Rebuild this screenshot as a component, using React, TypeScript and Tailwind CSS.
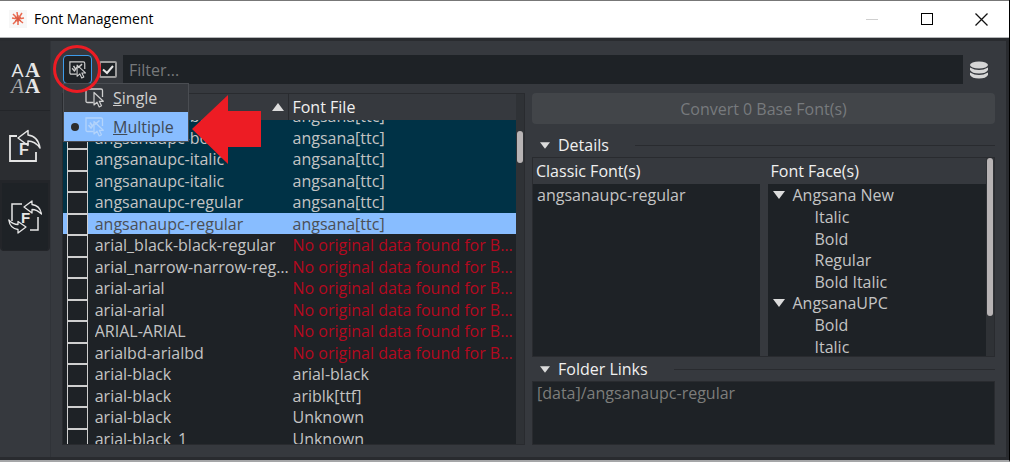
import { useLayoutEffect, useRef, useState } from "react";

type FontRow = { name: string; file: string; state?: "marked" | "current" | "missing" };

const MISSING = "No original data found for Base Font";

const FONTS: FontRow[] = [
  { name: "angsanaupc-bold", file: "angsana[ttc]", state: "marked" },
  { name: "angsanaupc-bold", file: "angsana[ttc]", state: "marked" },
  { name: "angsanaupc-italic", file: "angsana[ttc]", state: "marked" },
  { name: "angsanaupc-italic", file: "angsana[ttc]", state: "marked" },
  { name: "angsanaupc-regular", file: "angsana[ttc]", state: "marked" },
  { name: "angsanaupc-regular", file: "angsana[ttc]", state: "current" },
  { name: "arial_black-black-regular", file: MISSING, state: "missing" },
  { name: "arial_narrow-narrow-regular", file: MISSING, state: "missing" },
  { name: "arial-arial", file: MISSING, state: "missing" },
  { name: "arial-arial", file: MISSING, state: "missing" },
  { name: "ARIAL-ARIAL", file: MISSING, state: "missing" },
  { name: "arialbd-arialbd", file: MISSING, state: "missing" },
  { name: "arial-black", file: "arial-black" },
  { name: "arial-black", file: "ariblk[ttf]" },
  { name: "arial-black", file: "Unknown" },
  { name: "arial-black_1", file: "Unknown" },
];

const FACES = [
  { family: "Angsana New", styles: ["Italic", "Bold", "Regular", "Bold Italic"] },
  { family: "AngsanaUPC", styles: ["Bold", "Italic"] },
];

const ROW = {
  marked: "bg-[#003246] text-[#c4c4c4]",
  current: "bg-[#88bdff] text-[#4b4f55]",
  missing: "text-[#c4c4c4]",
};

const TAB = "flex h-[70px] w-full items-center justify-center border-b border-[#232529]";
const HEADING = "flex items-center gap-2 pl-2 text-[#f0f0f0]";

function Triangle({ up = false, className = "" }: { up?: boolean; className?: string }) {
  return (
    <svg viewBox="0 0 12 8" className={`shrink-0 fill-[#dcdcdc] ${className}`} aria-hidden="true">
      <path d={up ? "M6 0L12 8H0Z" : "M0 0H12L6 8Z"} />
    </svg>
  );
}

function SelectIcon({ multiple = false, className = "size-5" }: { multiple?: boolean; className?: string }) {
  return (
    <svg viewBox="0 0 20 20" fill="none" stroke="currentColor" className={`shrink-0 ${className}`} aria-hidden="true">
      <path d="M8.5 14.5H2.5Q1 14.500 1 13V1H16Q17.500 1 17.500 2.500V9" strokeWidth="1.300" />
      {multiple && <path d="M3.500 8L6 11L9 7M10 7.500L14.500 3.500M5 5.500L7 8.500" strokeWidth="1.600" />}
      <path d="M9 4.500V17L12 14.200L14.200 19L16.500 17.800L14.300 13.300H18.300Z" strokeWidth="1.200" strokeLinejoin="round" />
    </svg>
  );
}

function FontsIcon() {
  return (
    <span className="grid grid-cols-2 pt-1 text-[#e6e6e6]" aria-hidden="true">
      <span className="h-4 w-[15px] text-center font-['Open_Sans'] text-[19px] leading-4">A</span>
      <span className="h-4 w-[15px] text-center font-['Liberation_Serif'] text-[21px] leading-4 font-bold">A</span>
      <span className="h-4 w-[15px] text-center font-['Liberation_Serif'] text-[21px] leading-4 text-[#a8a8a8] italic">A</span>
      <span className="h-4 w-[15px] text-center font-['Liberation_Serif'] text-[21px] leading-4 font-bold">A</span>
    </span>
  );
}

function RevertIcon() {
  return (
    <svg viewBox="0 0 34 34" fill="none" stroke="#e6e6e6" className="size-[34px]" aria-hidden="true">
      <path d="M9 7H2V32H28V23" strokeWidth="1.800" />
      <path d="M10 9L20 1.500V6Q30 7 32 19Q27 12 20 12V16.500Z" strokeWidth="1.500" strokeLinejoin="round" />
      <text x="11" y="26" fill="#e6e6e6" stroke="none" className="font-['Liberation_Sans'] text-[16px] font-bold">F</text>
    </svg>
  );
}

function SwapIcon() {
  return (
    <svg viewBox="0 0 34 34" fill="none" stroke="#e6e6e6" className="size-[34px]" aria-hidden="true">
      <path d="M14 4H4V21M22 30H30V17" strokeWidth="1.500" />
      <path d="M16 7L24 1V4.500Q32 5.500 33.500 14Q29 9.500 24 9.500V13Z" strokeWidth="1.300" strokeLinejoin="round" />
      <path d="M18 27L10 33V29.500Q2 28.500 .8 20Q5 24.500 10 24.500V21.500Z" strokeWidth="1.300" strokeLinejoin="round" />
      <text x="13" y="23" fill="#e6e6e6" stroke="none" className="font-['Liberation_Sans'] text-[15px] font-bold">F</text>
    </svg>
  );
}

function TitleBar() {
  return (
    <header className="flex h-[38px] shrink-0 items-center border-t border-b border-t-[#777] border-b-[#b4b6b8] bg-white pl-[9px] text-black">
      <svg viewBox="0 0 18 18" className="size-[18px] bg-[#f7f7f7]" fill="none" stroke="#ea6a50" aria-hidden="true">
        <path d="M9 9L8 2M9 9L13 3M9 9L15 8M9 9L14 13M9 9L9 15M9 9L4 14M9 9L3 8M9 9L4 4" strokeWidth="1.500" />
        <path d="M9 5V12M6 7L12 11M6 11L12 7" stroke="#d65a44" />
      </svg>
      <h1 className="ml-[7px] text-sm">Font Management</h1>
      <div className="ml-auto flex">
        <button aria-label="Minimize" className="flex h-9 w-[55px] items-center justify-center">
          <span className="h-px w-3 bg-[#cfcfcf]" />
        </button>
        <button aria-label="Maximize" className="flex h-9 w-[55px] items-center justify-center">
          <span className="size-3 border border-black" />
        </button>
        <button aria-label="Close" className="flex h-9 w-[55px] items-center justify-center">
          <svg viewBox="0 0 13 13" className="size-[13px]" stroke="#111" strokeWidth="1.300">
            <path d="M.5 .5L12.500 12.500M12.500 .5L.5 12.500" />
          </svg>
        </button>
      </div>
    </header>
  );
}

function SideTabs() {
  return (
    <nav className="w-[50px] shrink-0">
      <button aria-label="Fonts" className={`${TAB} bg-[#2b2d31]`}><FontsIcon /></button>
      <button aria-label="Revert fonts" className={`${TAB} bg-[#2b2d31]`}><RevertIcon /></button>
      <button aria-label="Convert fonts" className={`${TAB} rounded-b-sm border-2 border-[#292b2f] bg-[#1e2226]`}><SwapIcon /></button>
    </nav>
  );
}

function ModeMenu() {
  const [mode, setMode] = useState("multiple");

  return (
    <div className="relative shrink-0">
      <button aria-label="Selection mode" className="flex h-[29px] w-[29px] items-center justify-center rounded-sm border border-[#3d9be9] bg-[#1e2226] text-[#cfcfcf]">
        <SelectIcon multiple className="size-[18px]" />
      </button>
      <div role="menu" className="absolute top-7 left-0 z-20 w-[126px] border border-[#4a4d52] bg-[#36393e]">
        <button
          role="menuitemradio"
          aria-checked={mode === "single"}
          onClick={() => setMode("single")}
          className="flex h-7 w-full items-center gap-2 pl-[21px] text-[#cfcfcf]"
        >
          <SelectIcon />
          <span><u>S</u>ingle</span>
        </button>
        <button
          role="menuitemradio"
          aria-checked={mode === "multiple"}
          onClick={() => setMode("multiple")}
          className="relative flex h-[29px] w-full items-center gap-2 bg-[#88bdff] pl-[21px] text-[#3f4a57]"
        >
          <span className="absolute left-[7px] size-2 rounded-full bg-[#2d2d2d]" />
          <SelectIcon multiple className="size-5 text-[#b4d4fb]" />
          <span><u>M</u>ultiple</span>
          <svg viewBox="0 0 69 69" className="absolute -top-[17px] left-32 size-[69px] fill-[#ed1c24]" aria-hidden="true">
            <path d="M0 34L36 0V16H69V52H36V69Z" />
          </svg>
        </button>
      </div>
      <span className="pointer-events-none absolute -top-2.5 -left-2.5 z-30 size-12 rounded-full border-3 border-[#ed1c24]" />
    </div>
  );
}

function FontTable() {
  const scroller = useRef<HTMLDivElement>(null);

  useLayoutEffect(() => {
    if (scroller.current) scroller.current.scrollTop = 15;
  }, []);

  return (
    <section className="flex min-h-0 min-w-0 border border-[#292b2f] bg-[#1e2226]">
      <div ref={scroller} className="min-w-0 flex-1 overflow-hidden">
        <table className="w-full table-fixed border-separate border-spacing-0 text-left">
          <thead>
            <tr>
              <th className="sticky top-0 z-10 h-[26px] w-[7%] bg-[#36393e]"><span className="sr-only">Selected</span></th>
              <th className="sticky top-0 z-10 h-[26px] w-[43%] border-r border-[#292b2f] bg-[#36393e] p-0 font-normal text-[#f0f0f0]">
                <span className="flex items-center justify-between pr-1">
                  Classic Font
                  <Triangle up className="h-2 w-3" />
                </span>
              </th>
              <th className="sticky top-0 z-10 h-[26px] bg-[#36393e] py-0 pl-[3px] font-normal text-[#f0f0f0]">Font File</th>
            </tr>
          </thead>
          <tbody>
            {FONTS.map((font, i) => (
              <tr key={i} className={font.state ? ROW[font.state] : "text-[#c4c4c4]"}>
                <td className={`${i % 2 ? "h-[21px]" : "h-[22px]"} p-0 pl-1`}>
                  <input
                    type="checkbox"
                    aria-label={font.name}
                    className={`${i % 2 ? "h-[21px]" : "h-[22px]"} block w-[21px] appearance-none border border-t-2 border-b-0 border-[#cfcfcf] bg-[#1e2226] checked:bg-[#3d9be9]`}
                  />
                </td>
                <td className="truncate p-0 leading-5">{font.name}</td>
                <td className={`truncate py-0 pr-0 pl-[3px] leading-5 ${font.state === "missing" ? "text-[#b5091f]" : ""}`}>
                  {font.file}
                </td>
              </tr>
            ))}
          </tbody>
        </table>
      </div>
      <div className="w-2 shrink-0 bg-[#2f3236] pt-[37px]">
        <div className="mx-px h-8 rounded-sm bg-[#b8b4b5]" />
      </div>
    </section>
  );
}

function DetailsPanel() {
  return (
    <section className="flex min-h-0 min-w-0 flex-col">
      <button disabled className="h-[31px] shrink-0 rounded-sm bg-[#424549] text-[#777a7d]">
        Convert 0 Base Font(s)
      </button>

      <h2 className={`${HEADING} mt-[9px] h-6 shrink-0`}>
        <Triangle className="h-[7px] w-[10px]" />
        Details
        <span className="ml-[18px] h-px flex-1 bg-[#292b2f]" />
      </h2>
      <div className="flex min-h-0 flex-1 border border-[#292b2f]">
        <div className="flex min-w-0 flex-1 flex-col">
          <h3 className="h-[26px] shrink-0 pl-[3px] leading-[26px] text-[#f0f0f0]">Classic Font(s)</h3>
          <div className="flex-1 bg-[#1e2226] pl-1">angsanaupc-regular</div>
        </div>
        <div className="ml-2 flex min-w-0 flex-1">
          <div className="flex min-w-0 flex-1 flex-col">
            <h3 className="h-[26px] shrink-0 pl-[3px] leading-[26px] text-[#f0f0f0]">Font Face(s)</h3>
            <ul className="min-h-0 flex-1 overflow-hidden bg-[#1e2226] pl-[5px]">
              {FACES.map((face) => (
                <li key={face.family}>
                  <span className="flex h-[22px] items-center gap-2">
                    <Triangle className="h-2 w-3" />
                    {face.family}
                  </span>
                  <ul className="pl-[42px]">
                    {face.styles.map((style, i) => (
                      <li key={style} className={i % 2 ? "h-[21px]" : "h-[22px]"}>{style}</li>
                    ))}
                  </ul>
                </li>
              ))}
            </ul>
          </div>
          <div className="w-2 shrink-0 bg-[#2f3236]">
            <div className="mx-px h-4/5 rounded-sm bg-[#b8b4b5]" />
          </div>
        </div>
      </div>

      <h2 className={`${HEADING} h-6 shrink-0`}>
        <Triangle className="h-[7px] w-[10px]" />
        Folder Links
        <span className="ml-[18px] h-px flex-1 bg-[#292b2f]" />
      </h2>
      <div className="h-16 shrink-0 border border-[#292b2f] bg-[#1e2226] pl-1 text-[#7d7d7b]">
        [data]/angsanaupc-regular
      </div>
    </section>
  );
}

export default function App() {
  return (
    <div className="flex h-screen flex-col border-r border-b-2 border-r-black border-b-[#a5a6a8] bg-[#36393e] font-['Open_Sans',sans-serif] text-base leading-[22px] text-[#c4c4c4]">
      <TitleBar />
      <div className="flex min-h-0 flex-1 border-t-3 border-r-3 border-b-3 border-[#292b2f]">
        <SideTabs />
        <main className="flex min-w-0 flex-1 flex-col border-l border-[#303338] pt-[14px] pr-[11px] pb-3 pl-[11px]">
          <div className="flex shrink-0 items-center pl-px">
            <ModeMenu />
            <label className="mr-1.5 ml-[7px] flex">
              <span className="sr-only">Show checked</span>
              <input type="checkbox" defaultChecked className="peer h-[17px] w-[18px] appearance-none rounded-xs border-2 border-[#9c9c9c] bg-[#1e2226]" />
              <svg viewBox="0 0 18 17" className="pointer-events-none -ml-[18px] hidden h-[17px] w-[18px] peer-checked:block" fill="none" stroke="#e6e6e6" strokeWidth="2">
                <path d="M4 8.500L8 12L14 5" />
              </svg>
            </label>
            <input
              aria-label="Filter"
              placeholder="Filter..."
              className="h-[29px] min-w-0 flex-1 bg-[#1e2226] px-1.5 outline-none placeholder:text-[#77797b]"
            />
            <button aria-label="Database" className="mr-[7px] ml-[7px]">
              <svg viewBox="0 0 18 18" className="size-[18px] fill-[#d6d6d6]">
                <ellipse cx="9" cy="4" rx="9" ry="3.500" />
                <path d="M0 6.500Q9 11.500 18 6.500V9Q16 12.500 9 12.500T0 9ZM0 11.500Q9 16.500 18 11.500V14Q16 17.500 9 17.500T0 14Z" />
              </svg>
            </button>
          </div>
          <div className="mt-[9px] grid min-h-0 flex-1 grid-cols-2 grid-rows-1 gap-[7px]">
            <FontTable />
            <DetailsPanel />
          </div>
        </main>
      </div>
    </div>
  );
}
